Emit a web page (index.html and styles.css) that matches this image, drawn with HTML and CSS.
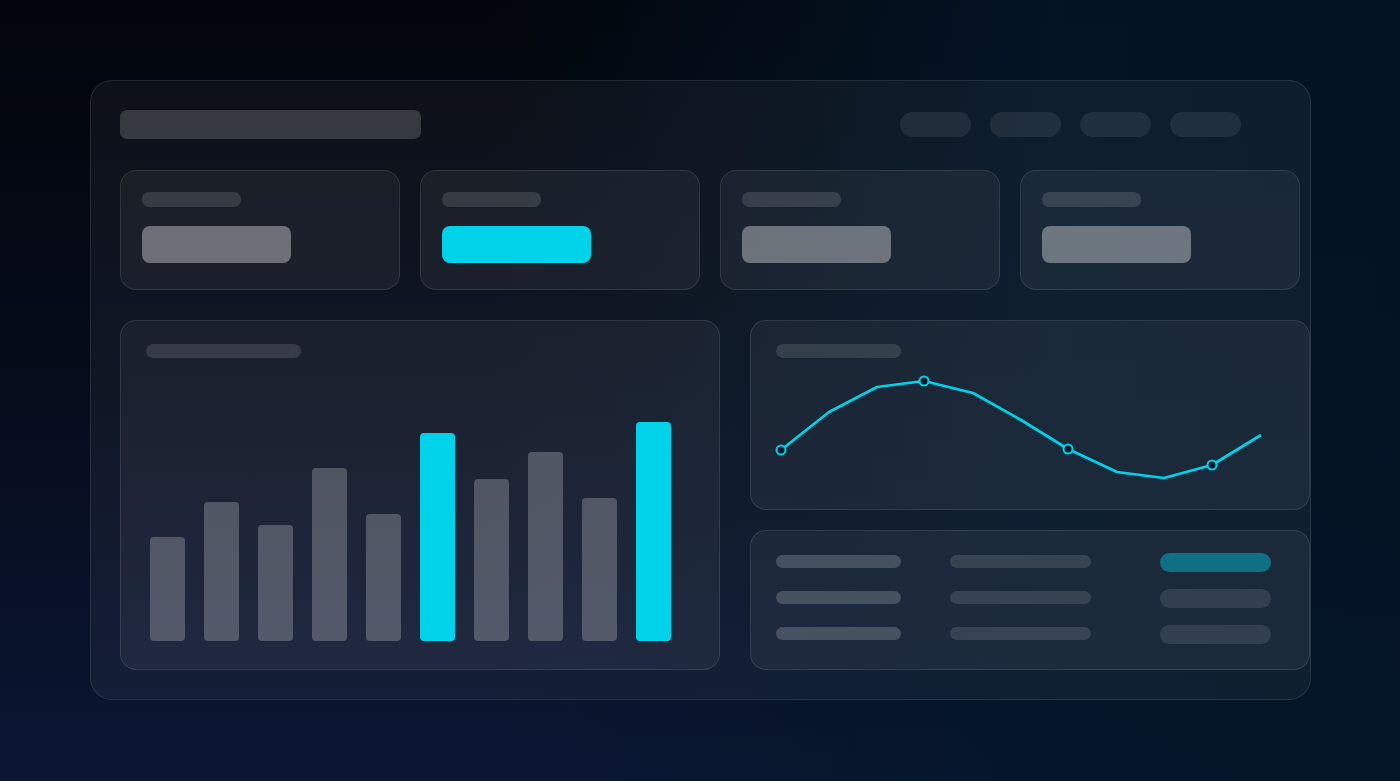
FILE: index.html
```html
<!DOCTYPE html>
<html lang="en">
<head>
<meta charset="utf-8">
<title>Dashboard skeleton</title>
<link rel="stylesheet" href="styles.css">
</head>
<body>
  <div class="panel">
    <div class="header">
      <div class="title-bar"></div>
      <div class="pills">
        <span class="pill"></span>
        <span class="pill"></span>
        <span class="pill"></span>
        <span class="pill"></span>
      </div>
    </div>

    <div class="stats">
      <div class="card stat">
        <div class="stat-label"></div>
        <div class="stat-value"></div>
      </div>
      <div class="card stat">
        <div class="stat-label"></div>
        <div class="stat-value accent"></div>
      </div>
      <div class="card stat">
        <div class="stat-label"></div>
        <div class="stat-value"></div>
      </div>
      <div class="card stat">
        <div class="stat-label"></div>
        <div class="stat-value"></div>
      </div>
    </div>

    <div class="lower">
      <div class="card bar-card">
        <div class="card-title wide"></div>
        <div class="bars">
          <div class="bar" style="height:104px"></div>
          <div class="bar" style="height:139px"></div>
          <div class="bar" style="height:116px"></div>
          <div class="bar" style="height:173px"></div>
          <div class="bar" style="height:127px"></div>
          <div class="bar accent" style="height:208px"></div>
          <div class="bar" style="height:162px"></div>
          <div class="bar" style="height:189px"></div>
          <div class="bar" style="height:143px"></div>
          <div class="bar accent" style="height:219px"></div>
        </div>
      </div>

      <div class="side">
        <div class="card line-card">
          <div class="card-title"></div>
          <svg class="line-chart" viewBox="0 0 558 151" width="558" height="151">
            <polyline class="line" points="30,92 78,54 126,29 173,23 222,35 270,62 317,91 366,114 413,120 461,107 510,77"/>
            <circle class="dot" cx="30" cy="92" r="4.5"/>
            <circle class="dot" cx="173" cy="23" r="4.5"/>
            <circle class="dot" cx="317" cy="91" r="4.5"/>
            <circle class="dot" cx="461" cy="107" r="4.5"/>
          </svg>
        </div>

        <div class="card table-card">
          <div class="table">
            <span class="cell c1"></span>
            <span class="cell c2"></span>
            <span class="cell c3 accent"></span>
            <span class="cell c1"></span>
            <span class="cell c2"></span>
            <span class="cell c3"></span>
            <span class="cell c1"></span>
            <span class="cell c2"></span>
            <span class="cell c3"></span>
          </div>
        </div>
      </div>
    </div>
  </div>
</body>
</html>
```

FILE: styles.css
```css
* {
  box-sizing: border-box;
}

html, body {
  margin: 0;
  height: 100%;
}

body {
  width: 1400px;
  height: 781px;
  overflow: hidden;
  padding: 80px 0 0 90px;
  font-family: "Inter", "Liberation Sans", sans-serif;
  background-color: #060d1a;
  background-image:
    linear-gradient(90deg, rgba(4, 22, 40, 0) 35%, rgba(4, 22, 40, 0.85) 75%, rgba(4, 21, 38, 0.85) 100%),
    linear-gradient(180deg, #02050b 0%, #050b19 45%, #0b1634 100%);
}

.panel {
  width: 1221px;
  height: 620px;
  border: 1px solid rgba(255, 255, 255, 0.1);
  border-radius: 22px;
  background: rgba(255, 255, 255, 0.045);
  padding: 29px 0 0 29px;
}

/* header */
.header {
  display: flex;
  align-items: center;
  justify-content: space-between;
  height: 29px;
  width: 1121px;
  margin-bottom: 31px;
}

.title-bar {
  width: 301px;
  height: 29px;
  border-radius: 7px;
  background: rgba(255, 255, 255, 0.17);
}

.pills {
  display: flex;
  gap: 19px;
}

.pill {
  display: block;
  width: 71px;
  height: 25px;
  border-radius: 13px;
  background: rgba(255, 255, 255, 0.08);
}

/* cards */
.card {
  border: 1px solid rgba(255, 255, 255, 0.1);
  border-radius: 16px;
  background: rgba(255, 255, 255, 0.05);
}

.stats {
  display: grid;
  grid-template-columns: repeat(4, 280px);
  column-gap: 20px;
  margin-bottom: 30px;
}

.stat {
  height: 120px;
  padding: 21px 21px;
}

.stat-label {
  width: 99px;
  height: 15px;
  border-radius: 7px;
  background: rgba(255, 255, 255, 0.13);
}

.stat-value {
  width: 149px;
  height: 37px;
  margin-top: 19px;
  border-radius: 8px;
  background: rgba(255, 255, 255, 0.36);
}

.stat-value.accent {
  background: #00d2ea;
}

/* lower */
.lower {
  display: grid;
  grid-template-columns: 600px 560px;
  column-gap: 30px;
  height: 350px;
}

.card-title {
  width: 125px;
  height: 14px;
  border-radius: 7px;
  background: rgba(255, 255, 255, 0.12);
}

.card-title.wide {
  width: 155px;
}

.bar-card {
  display: flex;
  flex-direction: column;
  padding: 23px 0 0 25px;
}

.bars {
  flex: 1;
  display: flex;
  align-items: flex-end;
  gap: 19px;
  padding: 0 0 28px 4px;
}

.bar {
  width: 35px;
  border-radius: 4px;
  background: rgba(255, 255, 255, 0.23);
}

.bar.accent {
  background: #00d2ea;
}

.side {
  display: flex;
  flex-direction: column;
  gap: 20px;
}

.line-card {
  height: 190px;
  padding-top: 23px;
}

.line-card .card-title {
  margin-left: 25px;
}

.line-chart {
  display: block;
}

.line {
  fill: none;
  stroke: #00d2ea;
  stroke-width: 2.7;
  stroke-linejoin: round;
  stroke-linecap: butt;
}

.dot {
  fill: #0e1a26;
  stroke: #00d2ea;
  stroke-width: 2;
}

.table-card {
  height: 140px;
  padding: 22px 0 0 25px;
}

.table {
  display: grid;
  grid-template-columns: 125px 141px 131px;
  column-gap: 49px;
  row-gap: 17px;
}

.cell {
  display: block;
  height: 13px;
  border-radius: 7px;
  margin-top: 2px;
  align-self: start;
}

.c1 {
  background: rgba(255, 255, 255, 0.19);
}

.c2 {
  background: rgba(255, 255, 255, 0.12);
}

.c3 {
  width: 111px;
  height: 19px;
  margin-top: 0;
  border-radius: 10px;
  justify-self: end;
  background: rgba(255, 255, 255, 0.1);
}

.c3.accent {
  background: rgba(0, 210, 234, 0.42);
}
```
